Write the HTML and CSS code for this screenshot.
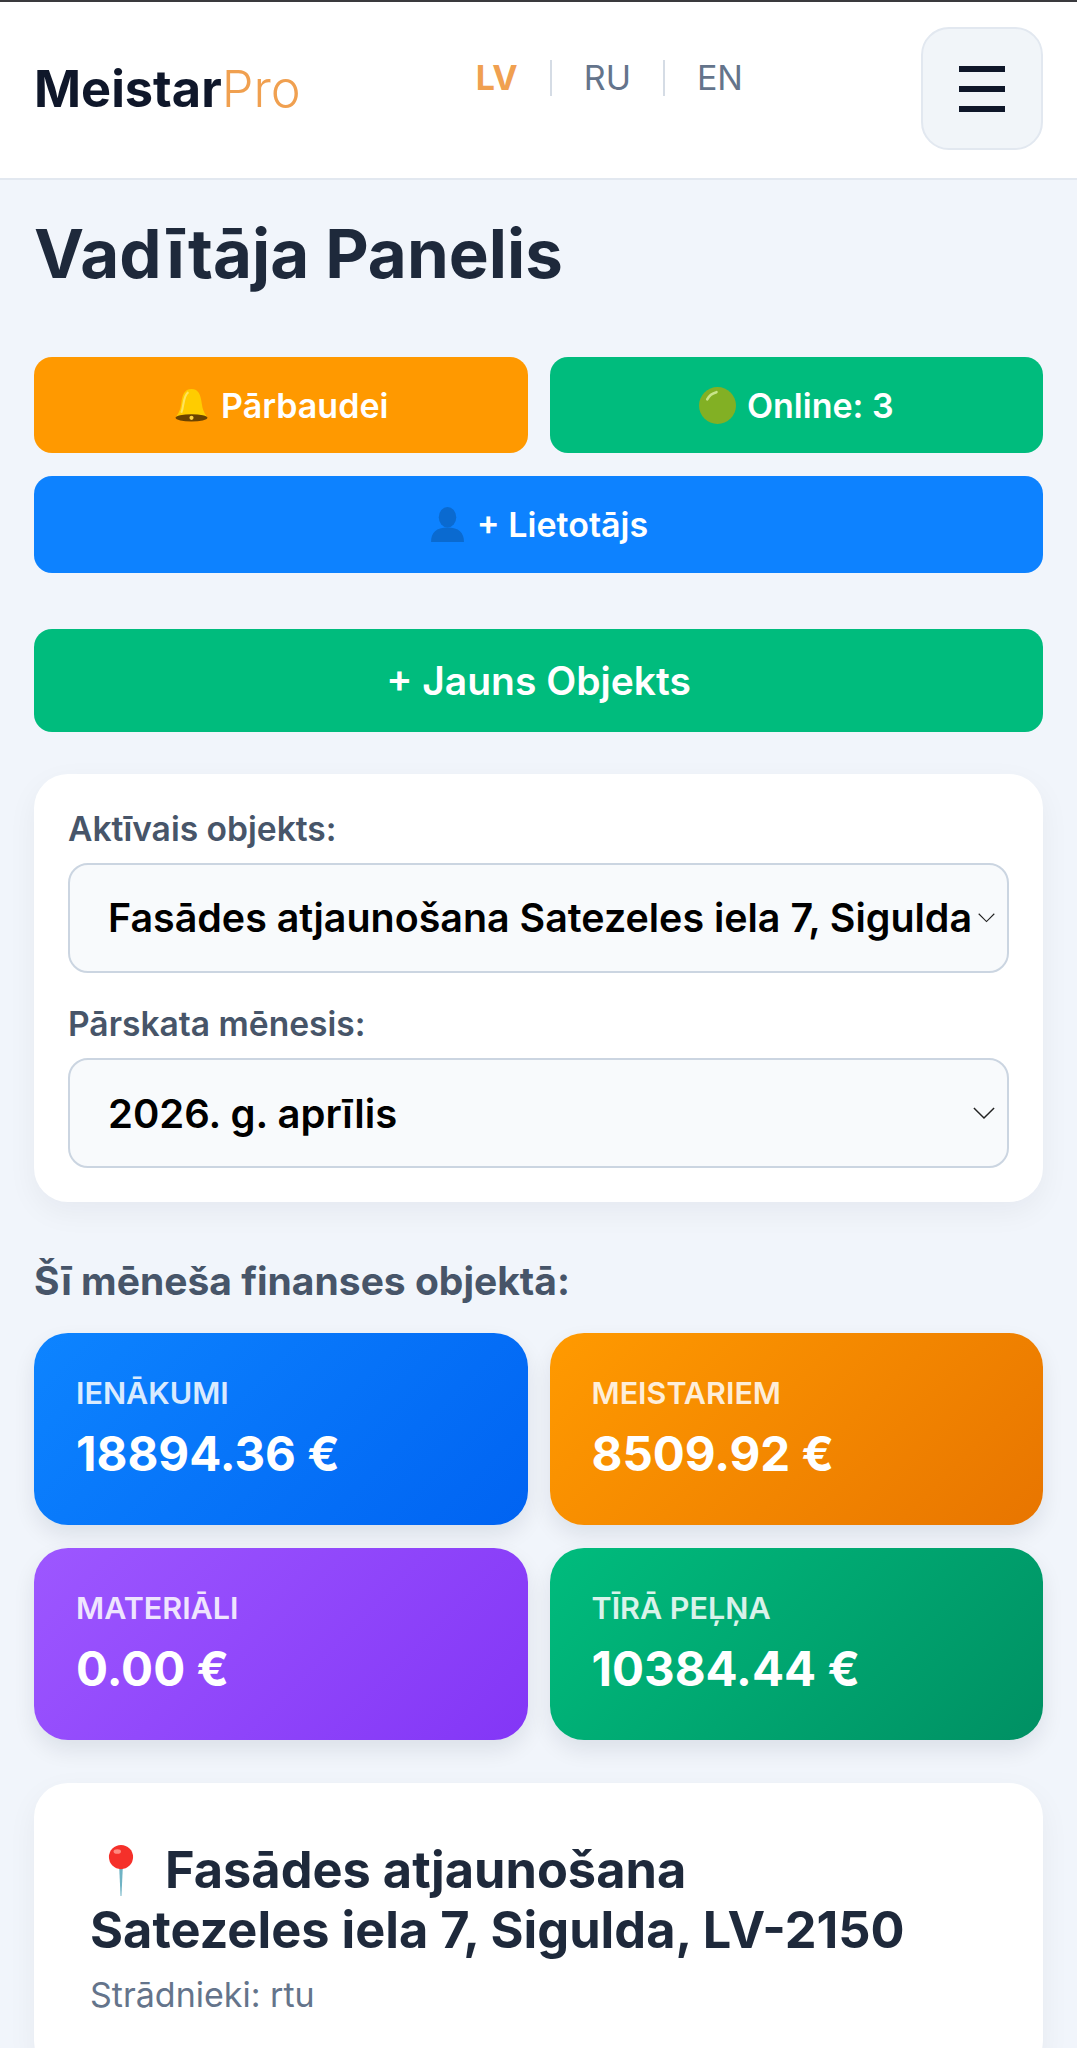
FILE: index.html
```html
<!DOCTYPE html>
<html lang="lv">
<head>
  <meta charset="UTF-8">
  <meta name="viewport" content="width=device-width, initial-scale=1.0">
  <title>MeistarPro</title>
  <link rel="stylesheet" href="styles.css">
</head>
<body>

<header class="topbar">
  <div class="logo">Meistar<span class="logo-pro">Pro</span></div>
  <nav class="langs">
    <a class="lang lang-active">LV</a>
    <a class="lang">RU</a>
    <a class="lang">EN</a>
  </nav>
  <button class="menu-btn" aria-label="Menu">
    <span></span><span></span><span></span>
  </button>
</header>

<main class="page">
  <h1 class="page-title">Vadītāja Panelis</h1>

  <div class="actions">
    <button class="btn btn-orange">
      <svg class="emoji" viewBox="0 0 36 36"><path d="M18 2c-7 0-9 6-10 14-.6 5-2 9-5 13h30c-3-4-4.400-8-5-13-1-8-3-14-10-14z" fill="#ffcc00"/><path d="M15 5c-3 2-4 6-5 12-.4 3-1 6-2 8" fill="none" stroke="#ffe45c" stroke-width="2"/><ellipse cx="18" cy="30" rx="15.500" ry="3.500" fill="#6b4300"/><circle cx="18" cy="30" r="2" fill="#ffd23e"/></svg>
      Pārbaudei
    </button>
    <button class="btn btn-green">
      <svg class="emoji" viewBox="0 0 36 36"><circle cx="18" cy="18" r="18" fill="#82b024"/><path d="M8 12c2-4 5-6 9-7" fill="none" stroke="#c9e58a" stroke-width="2.500" stroke-linecap="round"/></svg>
      Online: 3
    </button>
    <button class="btn btn-blue btn-wide">
      <svg class="emoji" viewBox="0 0 36 36"><ellipse cx="18" cy="11" rx="8.500" ry="10" fill="#0a6ad0"/><path d="M2 35c0-9 5-14 16-14s16 5 16 14z" fill="#0a6ad0"/></svg>
      + Lietotājs
    </button>
  </div>

  <button class="btn btn-green btn-new">+ Jauns Objekts</button>

  <section class="card filters">
    <label class="field-label" for="objectSelect">Aktīvais objekts:</label>
    <select class="field-select field-select-long" id="objectSelect">
      <option>Fasādes atjaunošana Satezeles iela 7, Sigulda</option>
    </select>
    <label class="field-label" for="monthSelect">Pārskata mēnesis:</label>
    <select class="field-select" id="monthSelect">
      <option>2026. g. aprīlis</option>
    </select>
  </section>

  <h2 class="section-title">Šī mēneša finanses objektā:</h2>

  <div class="stats">
    <div class="stat stat-blue">
      <div class="stat-label">IENĀKUMI</div>
      <div class="stat-value">18894.36 €</div>
    </div>
    <div class="stat stat-orange">
      <div class="stat-label">MEISTARIEM</div>
      <div class="stat-value">8509.92 €</div>
    </div>
    <div class="stat stat-purple">
      <div class="stat-label">MATERIĀLI</div>
      <div class="stat-value">0.00 €</div>
    </div>
    <div class="stat stat-green">
      <div class="stat-label">TĪRĀ PEĻŅA</div>
      <div class="stat-value">10384.44 €</div>
    </div>
  </div>

  <section class="card object-card">
    <h3 class="object-title">
      <svg class="pin" viewBox="0 0 28 58"><path d="M12 24h4l-1.500 32h-1z" fill="#6fb3c4"/><circle cx="14" cy="14" r="13" fill="#f5302a"/><ellipse cx="10" cy="8" rx="4" ry="2.500" fill="#ff8a80"/></svg>
      Fasādes atjaunošana<br>Satezeles iela 7, Sigulda, LV-2150
    </h3>
    <p class="object-meta">Strādnieki: rtu</p>
  </section>
</main>

</body>
</html>
```

FILE: styles.css
```css
* {
  box-sizing: border-box;
}

body {
  margin: 0;
  background-color: #f1f5fb;
  font-family: 'Inter', 'Liberation Sans', sans-serif;
  color: #1e293b;
}

button {
  font-family: inherit;
}

/* header */
.topbar {
  display: flex;
  align-items: center;
  height: 180px;
  padding: 0 34px 3px;
  background-color: #fff;
  border-top: 2px solid #3a3a3e;
  border-bottom: 2px solid #e2e8f0;
}

.logo {
  font-size: 50.500px;
  font-weight: 700;
  color: #0f172a;
}

.logo-pro {
  font-weight: 300;
  color: #f0a050;
}

.langs {
  display: flex;
  align-items: center;
  align-self: flex-start;
  margin: 58px 0 0 auto;
}

.lang {
  padding: 0 32px;
  border-left: 2px solid #d5dce5;
  font-size: 34px;
  line-height: 36px;
  color: #64748b;
}

.lang-active {
  border-left: none;
  font-weight: 700;
  color: #f0a050;
}

.menu-btn {
  display: flex;
  flex-direction: column;
  align-items: center;
  justify-content: center;
  gap: 14px;
  width: 122px;
  height: 123px;
  margin-left: 146px;
  padding: 0;
  background-color: #f1f5f9;
  border: 2px solid #e2e8f0;
  border-radius: 28px;
}

.menu-btn span {
  display: block;
  width: 46px;
  height: 6px;
  background-color: #0f172a;
}

/* page */
.page {
  padding: 0 34px;
}

.page-title {
  margin: 34px 0 63px;
  font-size: 67.200px;
  font-weight: 700;
  line-height: 80px;
  color: #1e293b;
}

.actions {
  display: grid;
  grid-template-columns: 1fr 1fr;
  gap: 23px 22px;
}

.btn {
  display: flex;
  align-items: center;
  justify-content: center;
  gap: 11px;
  height: 96px;
  border: none;
  border-radius: 18px;
  color: #fff;
  font-size: 34px;
  font-weight: 600;
}

.btn-wide {
  grid-column: 1 / 3;
  height: 97px;
}

.btn-orange {
  background-color: #ff9900;
}

.btn-green {
  background-color: #00bc7d;
}

.btn-blue {
  background-color: #0d82ff;
}

.btn-new {
  width: 100%;
  height: 103px;
  margin-top: 56px;
  font-size: 39px;
}

.emoji {
  width: 37px;
  height: 37px;
}

.card {
  background-color: #fff;
  border-radius: 34px;
  box-shadow: 0 10px 30px rgba(15, 23, 42, 0.05);
}

.filters {
  margin-top: 42px;
  padding: 34px;
}

.field-label {
  display: block;
  margin-bottom: 14px;
  font-size: 33.600px;
  font-weight: 600;
  line-height: 41px;
  color: #475569;
}

.field-select {
  display: block;
  width: 100%;
  height: 110px;
  margin-bottom: 30px;
  padding: 0 50px 0 38px;
  appearance: none;
  background-color: #f8fafc;
  background-image: url("data:image/svg+xml,%3Csvg xmlns='http://www.w3.org/2000/svg' viewBox='0 0 24 14'%3E%3Cpath d='M1 1l11 11L23 1' fill='none' stroke='%23222' stroke-width='1.600'/%3E%3C/svg%3E");
  background-repeat: no-repeat;
  background-position: right 12px center;
  background-size: 22px 13px;
  border: 2px solid #cbd5e1;
  border-radius: 20px;
  font-family: inherit;
  font-size: 40px;
  font-weight: 600;
  color: #000;
}

.field-select:last-child {
  margin-bottom: 0;
}

.field-select-long {
  padding-right: 28px;
  background-size: 17px 10px;
  font-size: 39.400px;
}

.section-title {
  margin: 56px 0 29px;
  font-size: 39px;
  font-weight: 700;
  line-height: 46px;
  color: #475569;
}

.stats {
  display: grid;
  grid-template-columns: 1fr 1fr;
  gap: 23px 22px;
}

.stat {
  height: 192px;
  padding: 42px 42px 0;
  border-radius: 34px;
  color: #fff;
  box-shadow: 0 10px 22px rgba(15, 23, 42, 0.09);
}

.stat-blue {
  background: linear-gradient(135deg, #0d84ff, #0063f2);
}

.stat-orange {
  background: linear-gradient(135deg, #ff9a00, #e87500);
}

.stat-purple {
  background: linear-gradient(135deg, #9d57ff, #8336f6);
}

.stat-green {
  background: linear-gradient(135deg, #00bc7d, #009063);
}

.stat-label {
  font-size: 30.500px;
  font-weight: 600;
  line-height: 36px;
  opacity: 0.85;
}

.stat-value {
  margin-top: 14px;
  font-size: 47.500px;
  font-weight: 700;
  line-height: 58px;
}

.object-card {
  margin-top: 43px;
  padding: 57px 56px 60px;
}

.object-title {
  margin: 0;
  font-size: 50.500px;
  font-weight: 700;
  line-height: 60px;
  color: #1e293b;
}

.pin {
  width: 26px;
  height: 54px;
  margin: 0 19px -10px 18px;
}

.object-meta {
  margin: 14px 0 0;
  font-size: 34px;
  color: #64748b;
}
```
